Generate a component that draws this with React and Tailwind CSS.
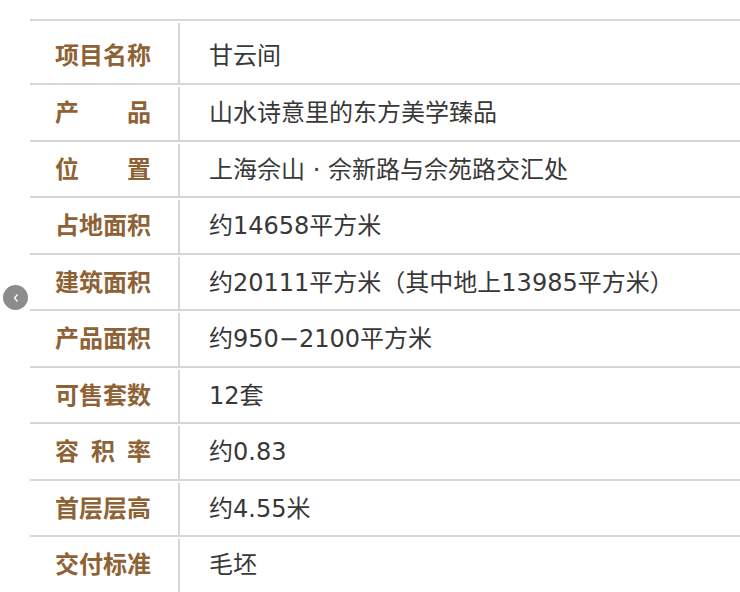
const rows = [
  ['项目名称', '甘云间'],
  ['产品', '山水诗意里的东方美学臻品'],
  ['位置', '上海佘山 · 佘新路与佘苑路交汇处'],
  ['占地面积', '约14658平方米'],
  ['建筑面积', '约20111平方米（其中地上13985平方米）'],
  ['产品面积', '约950−2100平方米'],
  ['可售套数', '12套'],
  ['容积率', '约0.83'],
  ['首层层高', '约4.55米'],
  ['交付标准', '毛坯'],
]

const labelFont = { fontFamily: '"Liberation Sans", "Noto Sans CJK SC", sans-serif' }
const valueFont = { fontFamily: '"DejaVu Sans", "Noto Sans CJK SC", sans-serif' }

// 项目概况表：左列标签两端对齐，右列为内容
export default function App() {
  return (
    <div className="relative h-[592px] w-[740px] overflow-hidden bg-white" style={labelFont}>
      <div className="pl-[30px] pt-[19px]">
        {rows.map(([label, value], i) => (
          <div
            key={label}
            className={`flex border-t-2 border-[#d6d6d6] pt-[2px] ${i === 0 ? 'h-[64px]' : 'h-[56.5px]'}`}
          >
            <div className={`flex w-[150px] shrink-0 items-center border-r-2 border-[#d6d6d6] pl-[25px] ${i === 0 ? 'pt-[6px]' : ''}`}>
              <span className="block w-[96px] text-justify text-[24px] font-bold leading-none text-[#8e6235] [text-align-last:justify]">
                {label}
              </span>
            </div>
            <div
              className={`flex items-center pl-[29px] text-[24px] leading-none text-[#383838] ${i === 0 ? 'pt-[6px]' : ''}`}
              style={valueFont}
            >
              {value}
            </div>
          </div>
        ))}
      </div>
      <div className="absolute left-[3px] top-[285px] flex h-[25px] w-[25px] items-center justify-center rounded-full bg-[#8c8c8c]">
        <svg width="12" height="12" viewBox="0 0 12 12" fill="none" stroke="white" strokeWidth="1.3">
          <path d="M7.5 2.5 L4.5 6 L7.5 9.5" />
        </svg>
      </div>
    </div>
  )
}
